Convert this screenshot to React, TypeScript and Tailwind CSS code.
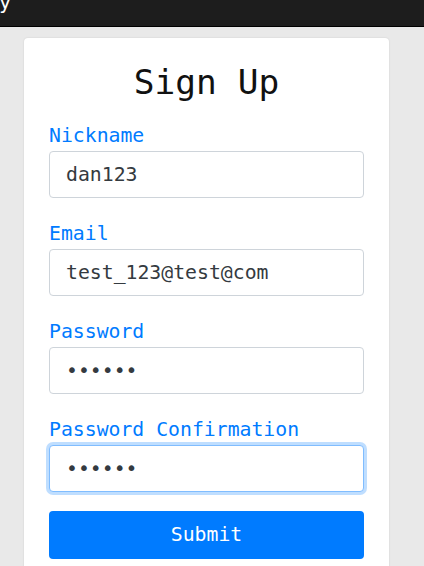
import React, { useState } from 'react';

const mono = "font-['DejaVu_Sans_Mono','Liberation_Mono',monospace]";

const Field: React.FC<{
  label: string;
  type?: string;
  value: string;
  focused?: boolean;
}> = ({ label, type = 'text', value, focused }) => {
  const [v, setV] = useState(value);
  return (
    <div className="flex flex-col">
      <label className="text-[19.8px] leading-[24px] text-[#007bff]">{label}</label>
      <input
        type={type}
        value={v}
        onChange={(e) => setV(e.target.value)}
        className={`mt-[3px] h-[47px] w-full rounded-[4px] border bg-white px-[16px] text-[19.8px] text-[#343a40] outline-none ${mono} ${
          focused
            ? 'border-[#80bdff] shadow-[0_0_0_3px_rgba(0,123,255,0.25)]'
            : 'border-[#ced4da]'
        }`}
      />
    </div>
  );
};

export default function App() {
  return (
    <div className={`min-h-[566px] bg-[#e9e9e9] ${mono}`}>
      <nav className="h-[27px] overflow-hidden border-b border-black bg-[#1d1d1d]">
        <span className="-ml-[1px] -mt-[10px] block text-[20px] leading-[24px] text-white">y</span>
      </nav>
      <div className="ml-[24px] mt-[11px] w-[365px] rounded-[4px] bg-white px-[25px] pt-[24px] pb-[20px] shadow-[0_0_2px_rgba(0,0,0,0.12)]">
        <h1 className="text-center text-[34.5px] leading-[40px] text-[#111]">Sign Up</h1>
        <form className="mt-[22px] flex flex-col gap-[24px]" onSubmit={(e) => e.preventDefault()}>
          <Field label="Nickname" value="dan123" />
          <Field label="Email" value="test_123@test@com" />
          <Field label="Password" type="password" value="123456" />
          <Field label="Password Confirmation" type="password" value="123456" focused />
          <button
            type="submit"
            className="-mt-[5px] h-[48px] w-full rounded-[4px] bg-[#007bff] text-[19.8px] text-white"
          >
            Submit
          </button>
        </form>
      </div>
    </div>
  );
}
